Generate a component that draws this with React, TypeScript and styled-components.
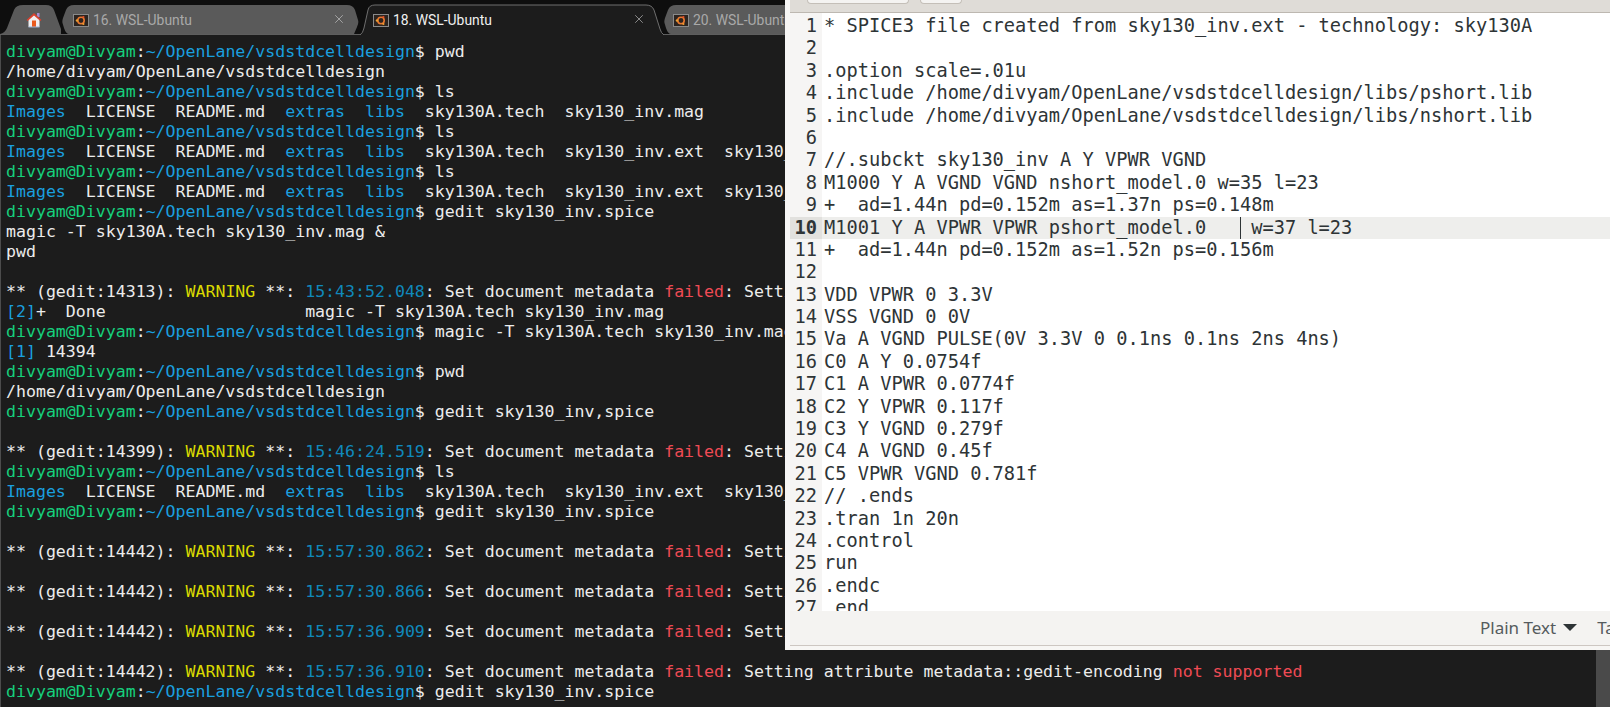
import * as React from "react";
import styled, { createGlobalStyle } from "styled-components";
import { X } from "lucide-react";

const Global = createGlobalStyle`
  html, body {
    margin: 0;
    padding: 0;
    background: #1c1c1c;
  }
  #root {
    width: 1610px;
    height: 707px;
    overflow: hidden;
  }
`;

const Screen = styled.div`
  position: relative;
  width: 1610px;
  height: 707px;
  display: flex;
  flex-direction: column;
  overflow: hidden;
`;

/* terminal tabs */
const TabStrip = styled.div`
  height: 35px;
  flex: none;
  display: flex;
  background: #0e0e0e;
  position: relative;
  &::after {
    content: "";
    position: absolute;
    left: 0;
    right: 0;
    bottom: 0;
    height: 1px;
    background: #5e5e5e;
  }
`;
const Tab = styled.div<{ $w: number; $pad: number; $active?: boolean }>`
  position: relative;
  z-index: ${(p) => (p.$active ? 2 : 1)};
  flex: none;
  width: ${(p) => p.$w}px;
  box-sizing: border-box;
  padding: 5px 0 0 ${(p) => p.$pad}px;
  display: flex;
  align-items: center;
  font-family: Roboto, "Liberation Sans", sans-serif;
  font-size: 13.9px;
  color: ${(p) => (p.$active ? "#f0f0f0" : "#a9a9a9")};
`;
const TabShape = styled.svg`
  position: absolute;
  left: 0;
  top: 0;
  overflow: visible;
`;
const TabLabel = styled.span`
  position: relative;
  margin-left: 4px;
  white-space: nowrap;
`;
const TabIcon = styled.svg`
  position: relative;
  flex: none;
`;
const HomeGlyph = styled.svg`
  position: relative;
  flex: none;
`;
const CloseBtn = styled.span<{ $left: number }>`
  position: absolute;
  left: ${(p) => p.$left}px;
  top: 12px;
  display: flex;
  color: #d8d8d8;
`;

const UbuntuIcon = () => (
  <TabIcon width="16" height="13" viewBox="0 0 16 13">
    <rect x="0.5" y="0.5" width="15" height="12" fill="#2c2420" stroke="#8a8a8a" />
    <circle cx="8" cy="6.5" r="3.2" fill="none" stroke="#e8772e" strokeWidth="1.6" />
    <circle cx="4" cy="6.5" r="1.2" fill="#f0a030" />
    <circle cx="10.4" cy="3" r="1.1" fill="#e8502e" />
    <circle cx="10.4" cy="10" r="1.1" fill="#f0a030" />
  </TabIcon>
);

const HomeIcon = () => (
  <HomeGlyph width="16" height="16" viewBox="0 0 16 16">
    <rect x="11" y="1" width="2.5" height="4" fill="#a58bd0" />
    <path d="M2.5 7 L8 2.5 L13.5 7 V15 H2.5 Z" fill="#f1eef0" />
    <path d="M0.5 8 L8 1 L15.5 8 L14.3 9 L8 3.4 L1.7 9 Z" fill="#d8402e" />
    <rect x="6" y="8.5" width="4" height="6.5" fill="#ea5a1e" />
    <rect x="2.5" y="14.5" width="11" height="1" fill="#9db4d8" />
  </HomeGlyph>
);

const Terminal = styled.div`
  flex: 1;
  display: flex;
  min-height: 0;
  border-left: 1px solid #4c4c4c;
`;
const TermBody = styled.div`
  flex: 1;
  min-width: 0;
  padding: 7px 0 0 5px;
  overflow: hidden;
  font-family: "DejaVu Sans Mono", "Liberation Mono", monospace;
  font-size: 16.57px;
  line-height: 20px;
  color: #ececec;
`;
const TermLine = styled.div`
  height: 20px;
  white-space: pre;
`;
const Scrollbar = styled.div`
  width: 14px;
  flex: none;
  background: #4a4a4a;
`;

type Tone = "green" | "blue" | "time" | "yellow" | "red";
const toneColor: Record<Tone, string> = {
  green: "#16d07c",
  blue: "#1a9fdf",
  time: "#1088bb",
  yellow: "#dada00",
  red: "#ef4b55",
};
const Seg = styled.span<{ $tone: Tone }>`
  color: ${(p) => toneColor[p.$tone]};
`;

const Prompt = ({ cmd }: { cmd: string }) => (
  <TermLine>
    <Seg $tone="green">divyam@Divyam</Seg>:<Seg $tone="blue">~/OpenLane/vsdstdcelldesign</Seg>$ {cmd}
  </TermLine>
);

const Warn = ({ pid, time }: { pid: string; time: string }) => (
  <TermLine>
    ** (gedit:{pid}): <Seg $tone="yellow">WARNING</Seg> **: <Seg $tone="time">{time}</Seg>: Set document metadata{" "}
    <Seg $tone="red">failed</Seg>: Setting attribute metadata::gedit-encoding <Seg $tone="red">not supported</Seg>
  </TermLine>
);

const Listing = ({ rest }: { rest: string }) => (
  <TermLine>
    <Seg $tone="blue">Images</Seg>  LICENSE  README.md  <Seg $tone="blue">extras</Seg>  <Seg $tone="blue">libs</Seg>
    {"  "}
    {rest}
  </TermLine>
);

const Blank = () => <TermLine />;

/* gedit window */
const GeditWindow = styled.div`
  position: absolute;
  z-index: 5;
  left: 785px;
  top: 0;
  width: 825px;
  height: 650px;
  box-sizing: border-box;
  display: flex;
  flex-direction: column;
  background: #f6f5f4;
  border-bottom: 4px solid #f7f6f4;
  box-shadow: inset 5px 0 0 #f7f6f5;
`;
const TitleBar = styled.div`
  height: 13px;
  flex: none;
  margin-left: 5px;
  box-sizing: border-box;
  display: flex;
  gap: 11px;
  padding-left: 17px;
  background: #dfdcd7;
  border-bottom: 1px solid #bdb8b1;
`;
const HeaderBtn = styled.div<{ $w: number }>`
  width: ${(p) => p.$w}px;
  height: 3px;
  background: #f4f3f1;
  border-radius: 0 0 5px 5px;
  border: 1px solid #c4bfb8;
  border-top: none;
`;
const Editor = styled.div`
  flex: 1;
  margin-left: 5px;
  padding-top: 2px;
  min-height: 0;
  overflow: hidden;
  background: linear-gradient(to right, #f6f5f4 32px, #ffffff 32px);
  font-family: "DejaVu Sans Mono", "Liberation Mono", monospace;
  font-size: 18.68px;
  color: #2e3436;
`;
const Row = styled.div<{ $current?: boolean }>`
  position: relative;
  height: 22.4px;
  line-height: 22.4px;
  display: flex;
  white-space: pre;
  background: ${(p) => (p.$current ? "#eeeeec" : "transparent")};
`;
const LineNo = styled.span<{ $current?: boolean }>`
  flex: none;
  width: 27px;
  padding-right: 5px;
  text-align: right;
  font-weight: ${(p) => (p.$current ? 700 : 400)};
  background: ${(p) => (p.$current ? "#e2e1de" : "transparent")};
`;
const Code = styled.span`
  padding-left: 2px;
`;
const Caret = styled.span`
  position: absolute;
  left: 450px;
  top: 0;
  width: 1px;
  height: 100%;
  background: #2e3436;
`;
const StatusBar = styled.div`
  height: 35px;
  flex: none;
  margin-left: 5px;
  box-sizing: border-box;
  border-bottom: 1px solid #cdc7c2;
  background: #f4f3f1;
  display: flex;
  align-items: center;
  padding: 0 0 2px 690px;
  font-family: "Noto Sans", "Open Sans", sans-serif;
  font-size: 17px;
  color: #555b5d;
  white-space: nowrap;
`;
const Arrow = styled.span`
  flex: none;
  width: 0;
  height: 0;
  margin: 0 20px 0 7px;
  border-left: 7px solid transparent;
  border-right: 7px solid transparent;
  border-top: 7px solid #2e3436;
`;

const code = [
  "* SPICE3 file created from sky130_inv.ext - technology: sky130A",
  "",
  ".option scale=.01u",
  ".include /home/divyam/OpenLane/vsdstdcelldesign/libs/pshort.lib",
  ".include /home/divyam/OpenLane/vsdstdcelldesign/libs/nshort.lib",
  "",
  "//.subckt sky130_inv A Y VPWR VGND",
  "M1000 Y A VGND VGND nshort_model.0 w=35 l=23",
  "+  ad=1.44n pd=0.152m as=1.37n ps=0.148m",
  "M1001 Y A VPWR VPWR pshort_model.0    w=37 l=23",
  "+  ad=1.44n pd=0.152m as=1.52n ps=0.156m",
  "",
  "VDD VPWR 0 3.3V",
  "VSS VGND 0 0V",
  "Va A VGND PULSE(0V 3.3V 0 0.1ns 0.1ns 2ns 4ns)",
  "C0 A Y 0.0754f",
  "C1 A VPWR 0.0774f",
  "C2 Y VPWR 0.117f",
  "C3 Y VGND 0.279f",
  "C4 A VGND 0.45f",
  "C5 VPWR VGND 0.781f",
  "// .ends",
  ".tran 1n 20n",
  ".control",
  "run",
  ".endc",
  ".end",
];

const withExt = "sky130A.tech  sky130_inv.ext  sky130_inv.mag  sky130_inv.spice";

export default function App() {
  return (
    <Screen>
      <Global />
      <TabStrip>
        <Tab $w={61} $pad={26}>
          <TabShape width="61" height="35">
            <path d="M0 34 Q5 33 7 28 L14 10 Q16 5 23 5 L46 5 Q52 5 54 10 L61 29 L61 34 Z" fill="#5a5a5a" />
          </TabShape>
          <HomeIcon />
        </Tab>
        <Tab $w={299} $pad={12}>
          <TabShape width="299" height="35">
            <path
              d="M8 34 Q5 34 3 28 L1.5 23 Q1 21 2 18 L5 10 Q7 5 13 5 L286 5 Q292 5 294 10 L297 20 Q298 23 296 27 L293 34 Z"
              fill="#5a5a5a"
            />
          </TabShape>
          <UbuntuIcon />
          <TabLabel>16. WSL-Ubuntu</TabLabel>
          <CloseBtn $left={271}>
            <X size={14} strokeWidth={1} />
          </CloseBtn>
        </Tab>
        <Tab $w={303} $pad={13} $active>
          <TabShape width="303" height="35">
            <path
              d="M0 35 Q3 33 4 28 L8 10 Q9 5 15 5 L286 5 Q292 5 294 10 L300 29 Q301 33 304 35"
              fill="#1c1c1c"
              stroke="#6e6e6e"
            />
          </TabShape>
          <UbuntuIcon />
          <TabLabel>18. WSL-Ubuntu</TabLabel>
          <CloseBtn $left={272}>
            <X size={14} strokeWidth={1} />
          </CloseBtn>
        </Tab>
        <Tab $w={300} $pad={10}>
          <TabShape width="300" height="35">
            <path
              d="M8 34 Q5 34 3 28 L1.5 23 Q1 21 2 18 L5 10 Q7 5 13 5 L290 5 L290 34 Z"
              fill="#5a5a5a"
            />
          </TabShape>
          <UbuntuIcon />
          <TabLabel>20. WSL-Ubuntu</TabLabel>
        </Tab>
      </TabStrip>

      <Terminal>
        <TermBody>
          <Prompt cmd="pwd" />
          <TermLine>/home/divyam/OpenLane/vsdstdcelldesign</TermLine>
          <Prompt cmd="ls" />
          <Listing rest="sky130A.tech  sky130_inv.mag" />
          <Prompt cmd="ls" />
          <Listing rest={withExt} />
          <Prompt cmd="ls" />
          <Listing rest={withExt} />
          <Prompt cmd="gedit sky130_inv.spice" />
          <TermLine>magic -T sky130A.tech sky130_inv.mag &amp;</TermLine>
          <TermLine>pwd</TermLine>
          <Blank />
          <Warn pid="14313" time="15:43:52.048" />
          <TermLine>
            <Seg $tone="blue">[2]</Seg>+  Done                    magic -T sky130A.tech sky130_inv.mag
          </TermLine>
          <Prompt cmd="magic -T sky130A.tech sky130_inv.mag &" />
          <TermLine>
            <Seg $tone="blue">[1]</Seg> 14394
          </TermLine>
          <Prompt cmd="pwd" />
          <TermLine>/home/divyam/OpenLane/vsdstdcelldesign</TermLine>
          <Prompt cmd="gedit sky130_inv,spice" />
          <Blank />
          <Warn pid="14399" time="15:46:24.519" />
          <Prompt cmd="ls" />
          <Listing rest={withExt} />
          <Prompt cmd="gedit sky130_inv.spice" />
          <Blank />
          <Warn pid="14442" time="15:57:30.862" />
          <Blank />
          <Warn pid="14442" time="15:57:30.866" />
          <Blank />
          <Warn pid="14442" time="15:57:36.909" />
          <Blank />
          <Warn pid="14442" time="15:57:36.910" />
          <Prompt cmd="gedit sky130_inv.spice" />
        </TermBody>
        <Scrollbar />
      </Terminal>

      <GeditWindow>
        <TitleBar>
          <HeaderBtn $w={100} />
          <HeaderBtn $w={40} />
        </TitleBar>
        <Editor>
          {code.map((text, i) => (
            <Row key={i} $current={i === 9}>
              <LineNo $current={i === 9}>{i + 1}</LineNo>
              <Code>{text}</Code>
              {i === 9 && <Caret />}
            </Row>
          ))}
        </Editor>
        <StatusBar>
          Plain Text
          <Arrow />
          Tab Width: 8
        </StatusBar>
      </GeditWindow>
    </Screen>
  );
}
